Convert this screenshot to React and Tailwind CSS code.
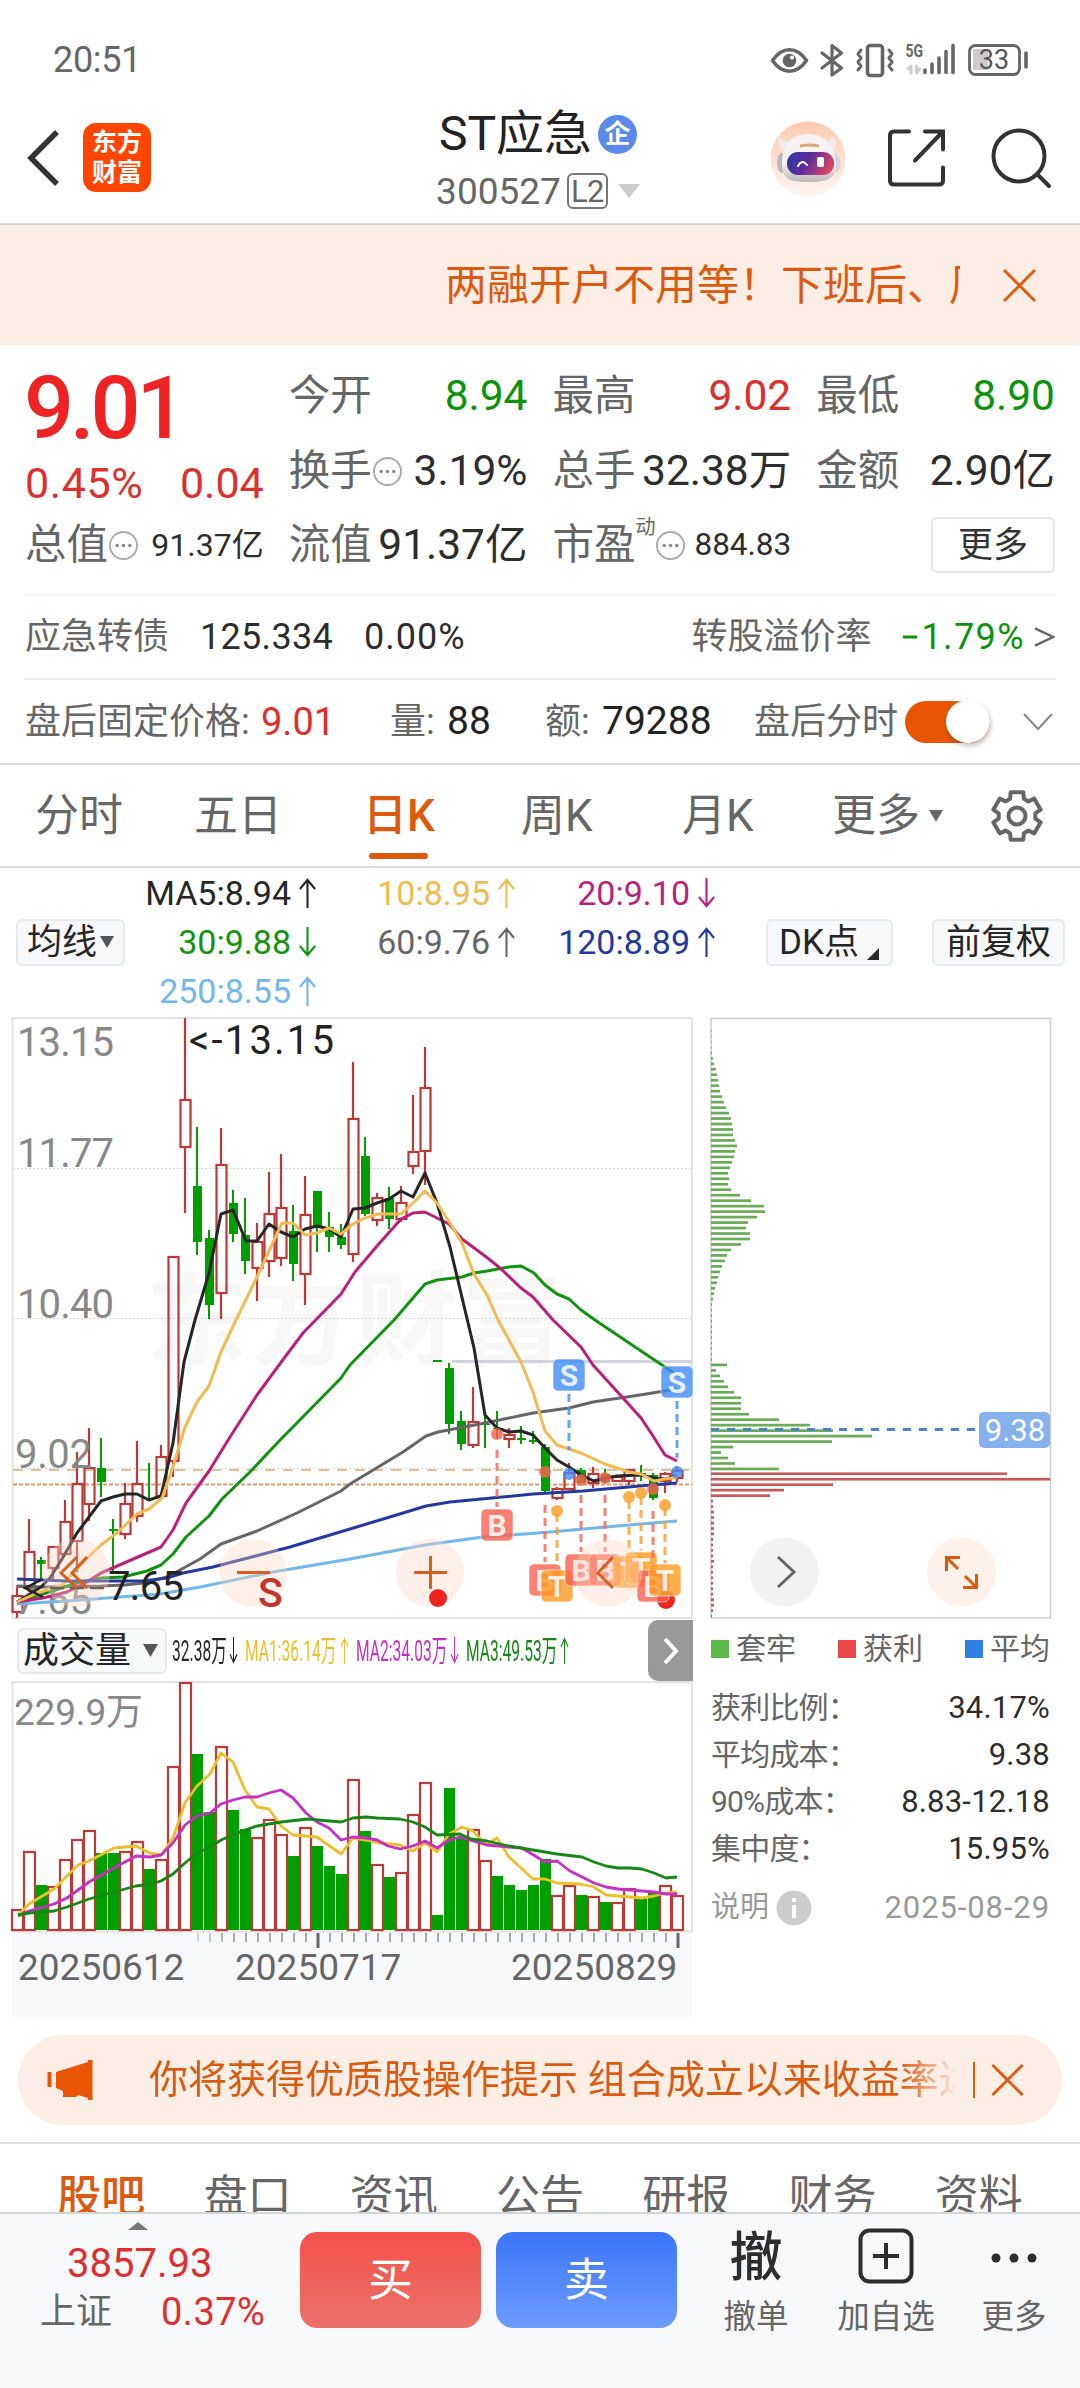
import clsx from 'clsx'

const RED = '#bb3a38'
const GREEN = '#009f00'

const quoteCols = [
  [
    { label: '今开', value: '8.94', tone: 'text-[#0b930b]' },
    { label: '换手', value: '3.19%', info: true },
    { label: '流值', value: '91.37亿' },
  ],
  [
    { label: '最高', value: '9.02', tone: 'text-[#dc2f2f]' },
    { label: '总手', value: '32.38万' },
    { label: '市盈', value: '884.83', info: true, sup: '动', small: true },
  ],
  [
    { label: '最低', value: '8.90', tone: 'text-[#0b930b]' },
    { label: '金额', value: '2.90亿' },
    { button: '更多' },
  ],
]

const maCols = [
  [
    { text: 'MA5:8.94', up: true, color: 'text-[#262626]' },
    { text: '30:9.88', up: false, color: 'text-[#119311]' },
    { text: '250:8.55', up: true, color: 'text-[#72b8ea]' },
  ],
  [
    { text: '10:8.95', up: true, color: 'text-[#f0bb50]' },
    { text: '60:9.76', up: true, color: 'text-[#666]' },
  ],
  [
    { text: '20:9.10', up: false, color: 'text-[#bb1f7c]' },
    { text: '120:8.89', up: true, color: 'text-[#23399f]' },
  ],
]

// [up, high, body top, body bottom, low]
const candles = [
  [1, 1585, 1596, 1612, 1618], [1, 1519, 1552, 1588, 1592], [0, 1557, 1560, 1564, 1580], [1, 1546, 1547, 1568, 1580],
  [1, 1500, 1522, 1554, 1556], [1, 1452, 1484, 1541, 1572], [1, 1428, 1468, 1504, 1521], [0, 1438, 1468, 1482, 1497],
  [0, 1519, 1529, 1531, 1572], [1, 1483, 1504, 1534, 1539], [1, 1441, 1484, 1516, 1522], [0, 1463, 1498, 1499, 1500],
  [1, 1445, 1457, 1496, 1497], [1, 1257, 1257, 1461, 1477], [1, 1018, 1100, 1147, 1213], [0, 1127, 1186, 1242, 1255],
  [0, 1230, 1238, 1305, 1319], [1, 1128, 1165, 1293, 1319], [0, 1190, 1203, 1234, 1242], [0, 1198, 1235, 1261, 1274],
  [1, 1223, 1242, 1268, 1301], [1, 1172, 1214, 1261, 1277], [1, 1154, 1208, 1258, 1266], [0, 1205, 1231, 1264, 1281],
  [1, 1176, 1215, 1274, 1305], [0, 1191, 1191, 1226, 1252], [0, 1212, 1227, 1237, 1252], [0, 1224, 1237, 1245, 1249],
  [1, 1062, 1119, 1254, 1262], [0, 1137, 1156, 1214, 1216], [1, 1193, 1198, 1220, 1226], [0, 1187, 1198, 1219, 1229],
  [1, 1186, 1203, 1219, 1222], [1, 1095, 1152, 1166, 1174], [1, 1047, 1088, 1151, 1185], [0, 1360, 1360, 1362, 1362],
  [0, 1363, 1368, 1424, 1434], [0, 1411, 1421, 1444, 1450], [1, 1387, 1422, 1445, 1448], [0, 1414, 1424, 1425, 1448],
  [0, 1411, 1428, 1429, 1438], [1, 1428, 1435, 1439, 1448], [0, 1426, 1438, 1440, 1444], [0, 1431, 1440, 1442, 1444],
  [0, 1444, 1447, 1491, 1492], [1, 1487, 1489, 1498, 1500], [1, 1463, 1473, 1489, 1490], [0, 1468, 1470, 1483, 1484],
  [1, 1467, 1474, 1483, 1488], [0, 1469, 1474, 1482, 1483], [1, 1476, 1477, 1481, 1482], [1, 1469, 1470, 1481, 1485],
  [0, 1465, 1473, 1474, 1481], [0, 1473, 1475, 1498, 1500], [1, 1472, 1474, 1481, 1493], [1, 1466, 1471, 1478, 1482],
]

const averages = [
  ['#72b8ea', '17,1604 67,1601 160,1594 200,1587 273,1572 350,1559 425,1545 483,1537 550,1532 617,1526 677,1521'],
  ['#666', '17,1586 43,1587 101,1586 125,1585 143,1583 167,1577 180,1570 200,1559 221,1544 257,1531 297,1513 341,1491 350,1484 403,1452 426,1436 438,1432 485,1423 533,1413 569,1408 593,1402 640,1395 677,1389'],
  ['#119311', '17,1602 40,1595 80,1582 101,1578 123,1577 147,1571 161,1565 173,1554 186,1537 209,1516 222,1499 250,1472 282,1438 293,1427 341,1378 350,1365 394,1320 401,1312 413,1298 425,1284 437,1280 462,1277 474,1273 487,1271 509,1267 521,1266 534,1273 545,1285 557,1294 569,1299 581,1310 595,1320 641,1351 677,1375'],
  ['#bb1f7c', '17,1602 43,1598 67,1592 87,1582 101,1573 161,1547 173,1530 186,1503 209,1471 230,1437 257,1395 282,1361 303,1333 341,1294 355,1272 377,1246 401,1219 413,1213 425,1212 449,1224 462,1239 485,1256 500,1268 521,1288 533,1297 553,1320 581,1347 593,1365 623,1398 641,1418 653,1436 665,1455 677,1461'],
  ['#262626', '17,1602 41,1587 50,1578 62,1559 77,1533 101,1501 113,1497 125,1494 137,1494 149,1500 161,1496 173,1443 184,1362 195,1320 209,1273 221,1214 233,1210 246,1241 257,1241 269,1224 281,1232 293,1237 305,1229 317,1226 329,1229 341,1237 353,1209 365,1208 377,1203 389,1199 401,1191 413,1197 425,1173 437,1203 450,1247 474,1348 485,1415 497,1428 509,1432 521,1431 533,1435 545,1448 557,1460 569,1467 581,1475 594,1481 605,1478 617,1476 641,1475 653,1478 665,1479 677,1476'],
  ['#f0bb50', '17,1602 37,1593 62,1585 83,1562 101,1545 118,1532 137,1514 149,1509 162,1498 173,1467 185,1427 197,1402 209,1386 221,1352 236,1320 257,1277 282,1223 293,1223 305,1235 317,1233 329,1228 341,1234 353,1224 365,1218 378,1214 401,1214 413,1203 425,1191 437,1203 450,1223 462,1243 474,1274 487,1295 498,1320 521,1362 533,1392 545,1431 557,1445 581,1453 605,1464 629,1472 641,1474 654,1481 665,1479 677,1477'],
  ['#23399f', '17,1579 67,1581 143,1581 167,1578 183,1573 213,1567 290,1547 350,1529 403,1513 426,1506 450,1502 533,1494 583,1491 640,1486 677,1483'],
]

const signals = [
  { t: 'S', x: 569, y: 1375, dot: 1474, from: 1394, to: 1450 },
  { t: 'S', x: 677, y: 1382, dot: 1472, from: 1401, to: 1458 },
  { t: 'B', x: 497, y: 1525, dot: 1434, from: 1450, to: 1507 },
  { t: 'B', x: 545, y: 1580, dot: 1472, from: 1505, to: 1562 },
  { t: 'T', x: 557, y: 1586, dot: 1511, from: 1514, to: 1567 },
  { t: 'B', x: 581, y: 1570, dot: 1480, from: 1495, to: 1552 },
  { t: 'B', x: 605, y: 1570, dot: 1478, from: 1495, to: 1552 },
  { t: 'T', x: 629, y: 1572, dot: 1497, from: 1501, to: 1553 },
  { t: 'T', x: 641, y: 1568, dot: 1493, from: 1497, to: 1550 },
  { t: 'B', x: 653, y: 1586, dot: 1489, from: 1511, to: 1567 },
  { t: 'T', x: 665, y: 1580, dot: 1505, from: 1508, to: 1563 },
]
const signalColors = { S: '#3f8cf8', B: '#f9604f', T: '#ff9a1f' }

// [up, top]
const volumes = [
  [1, 1910], [1, 1852], [0, 1885], [1, 1887], [1, 1860], [1, 1840], [1, 1831], [0, 1853], [0, 1853], [1, 1852],
  [1, 1842], [0, 1869], [1, 1860], [1, 1767], [1, 1683], [0, 1754], [0, 1812], [1, 1747], [0, 1810], [0, 1829],
  [1, 1838], [1, 1820], [1, 1835], [0, 1856], [1, 1828], [0, 1846], [0, 1866], [0, 1874], [1, 1780], [0, 1831],
  [1, 1865], [0, 1877], [1, 1873], [1, 1815], [1, 1783], [0, 1915], [0, 1788], [0, 1837], [1, 1830], [1, 1861],
  [0, 1876], [0, 1885], [0, 1890], [0, 1885], [0, 1859], [1, 1896], [1, 1886], [0, 1895], [1, 1897], [0, 1902],
  [1, 1903], [1, 1889], [0, 1898], [0, 1893], [1, 1886], [1, 1896],
]

const volumeAverages = [
  ['#eabf2b', '18,1915 29,1904 54,1889 78,1865 89,1861 114,1848 136,1846 150,1853 161,1855 173,1838 185,1803 197,1786 210,1774 221,1753 233,1762 245,1790 257,1807 269,1809 281,1826 293,1835 306,1836 317,1837 341,1854 353,1838 366,1840 379,1843 400,1845 413,1851 425,1843 437,1852 449,1834 462,1827 473,1831 486,1845 497,1838 509,1857 533,1879 545,1879 557,1883 580,1884 594,1887 606,1895 618,1896 642,1898 654,1896 666,1893 677,1892'],
  ['#c42fc4', '18,1916 29,1911 54,1904 67,1898 89,1882 114,1868 136,1856 150,1857 161,1855 173,1843 185,1825 197,1816 210,1813 221,1804 233,1800 245,1797 257,1797 269,1793 281,1790 293,1798 306,1813 317,1822 329,1828 341,1840 353,1837 366,1838 377,1840 388,1846 400,1849 413,1846 425,1841 437,1848 449,1840 460,1837 473,1841 487,1845 509,1847 522,1848 545,1862 557,1861 570,1871 594,1883 606,1887 618,1889 654,1892 666,1894 677,1894'],
  ['#168716', '18,1915 29,1913 54,1911 67,1907 89,1899 114,1892 136,1886 150,1884 161,1881 173,1874 185,1863 197,1853 210,1847 221,1840 245,1830 257,1826 281,1822 308,1819 329,1821 341,1822 353,1818 366,1817 377,1818 400,1819 413,1822 425,1827 437,1835 460,1834 471,1839 487,1841 509,1846 533,1850 557,1854 582,1857 594,1862 606,1866 618,1868 630,1868 642,1869 654,1873 666,1878 677,1877'],
]

const trapped = [
  0.5, 0.5, 0.5, 0.5, 1, 2, 3, 5, 6, 7, 8, 9, 11, 13, 15, 18, 20, 21, 22, 22, 24, 26, 24, 23, 21, 19, 17, 18, 17, 20, 29, 40, 53,
  54, 46, 37, 35, 39, 39, 30, 20, 16, 14, 11, 9, 7, 6, 4, 3, 2, 1, 1, 1, 1, 1, 1, 1, 1, 1, 1, 1, 16, 5, 9, 13, 17, 23,
  30, 30, 30, 38, 68, 99, 122, 161, 121, 22, 10, 17, 24, 68,
]
const profit = [
  296, 339, 122, 73, 59, 2, 2, 3, 3, 3, 3, 3, 2, 2, 2, 2, 3, 2, 2, 2, 2, 2, 2, 3, 3, 2, 1,
]

const chipStats = [
  ['获利比例：', '34.17%'],
  ['平均成本：', '9.38'],
  ['90%成本：', '8.83-12.18'],
  ['集中度：', '15.95%'],
]

const volumeStats = [
  { text: '32.38万', up: false, color: 'text-[#262626]', box: 'w-[54px]' },
  { text: 'MA1:36.14万', up: true, color: 'text-[#eabf2b]', box: 'w-[92px]' },
  { text: 'MA2:34.03万', up: false, color: 'text-[#c42fc4]', box: 'w-[91px]' },
  { text: 'MA3:49.53万', up: true, color: 'text-[#168716]', box: 'w-[91px]' },
]

const newsTabs = ['股吧', '盘口', '资讯', '公告', '研报', '财务', '资料']

const gearPoints = Array.from({ length: 6 }, (_, i) => i * 60 - 90)
  .flatMap((a) => [[a - 22, 18.5], [a - 15, 24.5], [a + 15, 24.5], [a + 22, 18.5]])
  .map(([a, r]) => {
    const rad = (a * Math.PI) / 180
    return `${27 + r * Math.cos(rad)},${27 + r * Math.sin(rad)}`
  })
  .join(' ')

function Arrow({ up, className }) {
  return (
    <svg viewBox="0 0 20 30" preserveAspectRatio="none" fill="none" stroke="currentColor" strokeWidth="2.2" className={className}>
      {up ? <path d="M10 30V2M2 11L10 2L18 11" /> : <path d="M10 0V28M2 19L10 28L18 19" />}
    </svg>
  )
}

function Caret({ className }) {
  return (
    <svg viewBox="0 0 14 12" preserveAspectRatio="none" fill="currentColor" className={className}>
      <path d="M0 0H14L7 12Z" />
    </svg>
  )
}

function Cross({ className }) {
  return (
    <svg viewBox="0 0 34 34" fill="none" stroke="#e05a0c" strokeWidth="3" className={className}>
      <path d="M1 1L33 33M33 1L1 33" />
    </svg>
  )
}

function InfoDots() {
  return (
    <svg viewBox="0 0 32 32" className="h-[31px] w-[31px] shrink-0">
      <circle cx="16" cy="16" r="14" fill="none" stroke="#aaa" strokeWidth="2" />
      <circle cx="9.5" cy="16" r="1.8" fill="#888" />
      <circle cx="16" cy="16" r="1.8" fill="#888" />
      <circle cx="22.5" cy="16" r="1.8" fill="#888" />
    </svg>
  )
}

function StatusBar() {
  return (
    <div className="flex h-[94px] shrink-0 items-center justify-between pt-[26px] pr-[52px] pl-[53px] text-[#666]">
      <span className="text-[36px] leading-none tracking-[-0.3px]">20:51</span>
      <svg viewBox="768 40 260 40" className="h-10 w-[260px]" fill="none" stroke="#666" strokeWidth="3.6" strokeLinejoin="round" strokeLinecap="round">
        <path d="M772.500 60.500C778 52.500 783 49.800 789.500 49.800S801 52.500 806.500 60.500C801 68.500 796 71.200 789.500 71.200S778 68.500 772.500 60.500Z" />
        <circle cx="789.500" cy="60.500" r="6.800" fill="#666" stroke="none" />
        <circle cx="792" cy="57.500" r="2" fill="#fff" stroke="none" />
        <path d="M822 53L841.500 68L832 75V45.500L841.500 53L822 68" strokeWidth="3.200" />
        <rect x="867.500" y="45.500" width="15" height="30" rx="3" />
        <path d="M861 50l-3 4l3 4l-3 4l3 4l-3 4M889 50l3 4l-3 4l3 4l-3 4l3 4" strokeWidth="3" />
        <text x="905.500" y="57" fontSize="18" fontWeight="700" textLength="17.500" lengthAdjust="spacingAndGlyphs" fill="#666" stroke="none">5G</text>
        <path d="M911 73V66L908 69M916.500 66V73L919.500 69" stroke="#ccc" strokeWidth="3" />
        <path d="M925 70V72.500M932 64V72.500M939 58V72.500M946 51.500V72.500M953 45.500V72.500" />
        <rect x="973" y="49" width="15" height="21" fill="#ccc" stroke="none" />
        <rect x="969.500" y="45.500" width="50" height="29" rx="6" strokeWidth="2.800" />
        <path d="M1026 53V67" />
        <text x="994" y="69" fontSize="27" textAnchor="middle" fill="#555" stroke="none">33</text>
      </svg>
    </div>
  )
}

function Robot() {
  return (
    <svg viewBox="0 0 76 76" className="h-[76px] w-[76px]">
      <defs>
        <linearGradient id="halo" x1="0" y1="0" x2="0" y2="1">
          <stop offset="0" stopColor="#fccab2" />
          <stop offset="1" stopColor="#fff6f1" />
        </linearGradient>
        <linearGradient id="shell" x1="0" y1="0" x2="0" y2="1">
          <stop offset="0.6" stopColor="#f6f2f1" />
          <stop offset="1" stopColor="#bcb6b9" />
        </linearGradient>
        <linearGradient id="visor" x1="0" y1="0" x2="1" y2="0.3">
          <stop offset="0" stopColor="#2b3aa6" />
          <stop offset="0.5" stopColor="#5a2b9c" />
          <stop offset="1" stopColor="#d04468" />
        </linearGradient>
      </defs>
      <circle cx="38" cy="38" r="37.500" fill="url(#halo)" />
      <path d="M9 15Q6 24 14 29L22 21Q12 21 9 15ZM62 15Q70 22 63 30L54 20Q62 20 62 15Z" fill="#f1ecec" />
      <ellipse cx="12" cy="42" rx="5" ry="10" fill="#bbb6bc" />
      <ellipse cx="66" cy="42" rx="4.500" ry="9" fill="#d8d2d5" />
      <path d="M12 42C12 23 22 13 38 13S64 23 66 42C67 56 60 61 39 61S12 58 12 42Z" fill="url(#shell)" />
      <path d="M30 23.500Q39 21.500 49 23.500V26.500Q39 24.500 30 26.500Z" fill="#dca873" />
      <rect x="17" y="31" width="47" height="23" rx="11" fill="url(#visor)" />
      <path d="M28 45Q32 37.500 37 44" fill="none" stroke="#fff" strokeWidth="2" strokeLinecap="round" />
      <rect x="47" y="36" width="7" height="10" rx="2" fill="#fff" />
    </svg>
  )
}

function NavBar() {
  return (
    <div className="flex h-[131px] shrink-0 items-center border-b-2 border-[#d9d9db]">
      <div className="flex w-[360px] items-center gap-[24px] pb-[2px] pl-[27px]">
        <svg viewBox="0 0 32 56" className="h-[56px] w-[32px]" fill="none" stroke="#333" strokeWidth="5.500">
          <path d="M30 2L4 28L30 54" />
        </svg>
        <div className="flex h-[69px] w-[68px] flex-col items-center justify-center gap-[3px] rounded-[13px] bg-[#ff4500] text-[25px] leading-[27px] font-bold text-white">
          <span>东方</span>
          <span>财富</span>
        </div>
      </div>
      <div className="flex w-[356px] flex-col items-center pt-[9px]">
        <div className="flex h-[56px] items-center gap-1.5">
          <span className="text-[48px] leading-none text-[#222]">ST应急</span>
          <span className="flex h-[39px] w-[39px] items-center justify-center rounded-full bg-[#5b8ae8] text-[26px] leading-none font-bold text-white">企</span>
        </div>
        <div className="flex h-[58px] items-center text-[#666]">
          <span className="text-[37px] leading-none">300527</span>
          <span className="ml-[6px] flex h-[36px] w-[41px] items-center justify-center rounded-[6px] border-2 border-[#777] text-[31px] leading-none tracking-tight">L2</span>
          <Caret className="ml-[10px] h-[14px] w-[22px] text-[#ccc]" />
        </div>
      </div>
      <div className="flex w-[364px] items-center justify-end pr-[29px]">
        <Robot />
        <svg viewBox="0 1.5 60 60" className="ml-[40px] h-[60px] w-[60px]" fill="none" stroke="#333" strokeWidth="4" strokeLinecap="round">
          <path d="M23 4H8Q4 4 4 8V53Q4 57 8 57H53Q57 57 57 53V40" />
          <path d="M39 4H57V22M56 5L29 33" />
        </svg>
        <svg viewBox="0 0 62 62" className="ml-[43px] h-[62px] w-[62px]" fill="none" stroke="#333" strokeWidth="4" strokeLinecap="round">
          <circle cx="30" cy="28" r="25.500" />
          <path d="M48 46L60 58" />
        </svg>
      </div>
    </div>
  )
}

function QuoteCell({ cell }) {
  if (cell.button) {
    return (
      <button className="ml-auto flex h-[56px] w-[124px] items-center justify-center rounded-[6px] border-2 border-[#e6e6e6] text-[35px] leading-none text-[#333]">
        {cell.button}
      </button>
    )
  }
  return (
    <>
      <span className="text-[41.5px] leading-none text-[#666]">{cell.label}</span>
      {cell.sup && <span className="-mr-px self-start pt-[8px] text-[20px] leading-none text-[#666]">{cell.sup}</span>}
      {cell.info && <InfoDots />}
      <span className={clsx('ml-auto leading-none', cell.small ? 'text-[31.5px]' : 'text-[42.5px]', cell.tone ?? 'text-[#2d2d2d]')}>
        {cell.value}
      </span>
    </>
  )
}

function Quote() {
  return (
    <section className="flex h-[249px] shrink-0 gap-[25px] px-[25px] pt-[14px] whitespace-nowrap">
      <div className="w-[239px]">
        <div className="-ml-px flex h-[94px] items-center pt-[3px] text-[88px] leading-none font-medium tracking-[-4px] text-[#ee2424]">9.01</div>
        <div className="flex h-[60px] items-center justify-between text-[43px] leading-none text-[#dc2f2f]">
          <span className="tracking-[0.6px]">0.45%</span>
          <span>0.04</span>
        </div>
        <div className="flex h-[64px] items-center">
          <span className="text-[41.5px] leading-none text-[#666]">总值</span>
          <InfoDots />
          <span className="ml-auto text-[32px] leading-none text-[#2d2d2d]">91.37亿</span>
        </div>
      </div>
      {quoteCols.map((col, i) => (
        <div key={i} className="w-[239px]">
          <div className="flex h-[74px] items-center"><QuoteCell cell={col[0]} /></div>
          <div className="flex h-[76px] items-center"><QuoteCell cell={col[1]} /></div>
          <div className="flex h-[72px] items-center"><QuoteCell cell={col[2]} /></div>
        </div>
      ))}
    </section>
  )
}

function BondRows() {
  return (
    <section className="shrink-0 border-b-2 border-[#dcdcdc] px-[25px] text-[36px] leading-none whitespace-nowrap text-[#666]">
      <div className="flex h-[84px] items-center border-t-2 border-[#f4f4f4]">
        <span>应急转债</span>
        <span className="ml-[31px] tracking-[0.3px] text-[#2d2d2d]">125.334</span>
        <span className="ml-[31px] tracking-[1px] text-[#2d2d2d]">0.00%</span>
        <span className="ml-auto">转股溢价率</span>
        <svg viewBox="0 0 14 4" className="ml-[32px] h-1 w-[14px]"><path d="M0 2H14" stroke="#0b930b" strokeWidth="3" /></svg>
        <span className="ml-[4px] tracking-[1.4px] text-[#0b930b]">1.79%</span>
        <svg viewBox="0 0 22 22" className="ml-[9px] h-[22px] w-[21px]" fill="none" stroke="#666" strokeWidth="2.500">
          <path d="M1 2L20 11L1 20" />
        </svg>
      </div>
      <div className="flex h-[85px] items-center border-t-2 border-[#f0f0f0] text-[#666]">
        <span className="w-[236px]">盘后固定价格:</span>
        <span className="w-[129px] text-[38px] text-[#dc2f2f]">9.01</span>
        <span className="w-[57px]">量:</span>
        <span className="w-[98px] text-[39px] text-[#222]">88</span>
        <span className="w-[57px]">额:</span>
        <span className="w-[152px] text-[39px] text-[#222]">79288</span>
        <span>盘后分时</span>
        <div className="ml-[7px] flex h-[42px] w-[85px] items-center justify-end rounded-full bg-[#ea5504]">
          <div className="h-[43px] w-[44px] rounded-full bg-white shadow-[1px_3px_5px_rgba(0,0,0,0.25)]" />
        </div>
        <svg viewBox="0 0 30 18" className="mr-[2px] ml-auto h-[18px] w-[30px]" fill="none" stroke="#888" strokeWidth="2">
          <path d="M1 1L15 16L29 1" />
        </svg>
      </div>
    </section>
  )
}

function PeriodTabs() {
  return (
    <nav className="flex h-[103px] shrink-0 items-center border-b-2 border-[#dcdcdc] pl-[35px] text-[44px] leading-none whitespace-nowrap text-[#666]">
      <span className="w-[159px]">分时</span>
      <span className="w-[169px]">五日</span>
      <span className="relative w-[158px] font-medium text-[#dc5a10]">
        日K
        <i className="absolute top-[59px] left-[6px] h-[6px] w-[59px] rounded-full bg-[#dc5a10]" />
      </span>
      <span className="w-[161px]">周K</span>
      <span className="w-[150px]">月K</span>
      <span>更多</span>
      <Caret className="ml-[9px] h-[12px] w-[14px]" />
      <svg viewBox="0 0 54 54" className="ml-[47px] h-[54px] w-[54px]" fill="none" stroke="#666" strokeWidth="4" strokeLinejoin="round">
        <polygon points={gearPoints} />
        <circle cx="27" cy="27" r="8.500" />
      </svg>
    </nav>
  )
}

function AverageBar() {
  return (
    <div className="flex h-[148px] shrink-0 items-center pl-4 text-[35px] leading-none whitespace-nowrap text-[#262626]">
      <button className="flex h-[47px] w-[109px] items-center justify-center gap-[3px] rounded-[6px] border-2 border-[#e7e9ec] bg-[#f7f8fa]">
        <span>均线</span>
        <Caret className="h-[12px] w-[14px] text-[#555]" />
      </button>
      {maCols.map((col, i) => (
        <div key={i} className={clsx('h-full text-[34px]', i === 0 ? 'w-[192px]' : i === 1 ? 'w-[199px]' : 'w-[200px]')}>
          {col.map((ma) => (
            <div key={ma.text} className={clsx('flex h-[49px] items-center justify-end gap-[7px]', ma.color)}>
              <span>{ma.text}</span>
              <Arrow up={ma.up} className="h-[30px] w-[19px]" />
            </div>
          ))}
        </div>
      ))}
      <button className="ml-[50px] flex h-[47px] w-[127px] items-center rounded-[6px] border-2 border-[#e7e9ec] bg-[#f7f8fa] pl-[11px]">
        <span>DK点</span>
        <svg viewBox="0 0 12 12" className="mt-6 ml-[8px] h-3 w-3"><path d="M12 0V12H0Z" fill="#262626" /></svg>
      </button>
      <button className="ml-[39px] flex h-[47px] w-[133px] items-center justify-center rounded-[6px] border-2 border-[#e7e9ec] bg-[#f7f8fa]">
        前复权
      </button>
    </div>
  )
}

function KChart() {
  return (
    <svg viewBox="0 1016 700 604" className="block h-[604px] w-[700px]" fill="none">
      <text x="146" y="1357" fontSize="101" fontWeight="700" letterSpacing="4" fill="#f7f7f7">东方财富</text>
      <g stroke="#d8d8d8" strokeDasharray="2 2">
        <path d="M13 1168.500H692M13 1318.500H692M13 1468.500H692" />
      </g>
      <rect x="12.500" y="1018" width="679.500" height="600" stroke="#e3e3e3" strokeWidth="2" />
      <path d="M13 1470H692" stroke="#dcc19c" strokeWidth="2" strokeDasharray="10 8" />
      <path d="M13 1484.500H692" stroke="#de9a6c" strokeWidth="2" strokeDasharray="4 2" />
      <path d="M452 1361.500H692" stroke="#d0d4da" strokeWidth="3" />

      {candles.map(([up, high, top, bottom, low], i) => {
        const x = 17 + i * 12
        return up ? (
          <g key={i} stroke={RED} strokeWidth="2.2">
            <path d={`M${x} ${high}V${top}M${x} ${bottom}V${low}`} />
            <rect x={x - 4.500} y={top} width="10" height={bottom - top} />
          </g>
        ) : (
          <g key={i} fill={GREEN}>
            <rect x={x - 1} y={high} width="2" height={low - high} />
            <rect x={x - 4} y={top} width="9" height={bottom - top} />
          </g>
        )
      })}

      <g fill="#888" fontSize="40">
        <text x="17" y="1056" textLength="97">13.15</text>
        <text x="17" y="1167" textLength="97">11.77</text>
        <text x="17" y="1318" textLength="97">10.40</text>
        <text x="15" y="1468" textLength="77">9.02</text>
        <text x="15" y="1614" textLength="77">7.65</text>
      </g>
      {averages.map(([color, points]) => (
        <polyline key={color} points={points} stroke={color} strokeWidth="3" strokeLinejoin="round" />
      ))}
      <g fill="#222" fontSize="40">
        <text x="189" y="1054" textLength="145">&lt;-13.15</text>
        <text x="108" y="1600" textLength="76">7.65</text>
      </g>
      <path d="M43 1579L25 1588L43 1597M50 1588H64M70 1588H84M90 1588H104" stroke="#222" strokeWidth="2.500" />

      <circle cx="666" cy="1600" r="9" fill="#f02520" />
      {signals.map((s, i) => (
        <g key={i}>
          <path d={`M${s.x} ${s.from}V${s.to}`} stroke={signalColors[s.t]} strokeOpacity="0.8" strokeWidth="3" strokeDasharray="8 5" />
          <circle cx={s.x} cy={s.dot} r="6" fill={signalColors[s.t]} fillOpacity="0.8" />
          <rect x={s.x - 16} y={s.y - 16} width="32" height="32" rx="5" fill={signalColors[s.t]} fillOpacity="0.8" stroke="#fff" strokeOpacity="0.6" />
          <text x={s.x} y={s.y + 10.500} fontSize="30" fontWeight="700" textAnchor="middle" fill="#fff" fillOpacity="0.85">{s.t}</text>
        </g>
      ))}

      <g fill="#fbd5c0" fillOpacity="0.36">
        <circle cx="76" cy="1573" r="34" />
        <circle cx="253" cy="1573" r="34" />
        <circle cx="430" cy="1573" r="34" />
        <circle cx="608" cy="1573" r="34" />
      </g>
      <g stroke="#d8601c" strokeWidth="3">
        <path d="M77 1557L61 1573L77 1588M87 1557L72 1573L87 1588" />
        <path d="M237 1572.500H270M414 1572.500H447M430.500 1556V1589" />
        <path d="M613 1557L598 1573L613 1588" />
      </g>
      <text x="258" y="1607" fontSize="41" fontWeight="500" fill="#c3352f">S</text>
      <circle cx="438" cy="1598" r="9" fill="#f02520" />
    </svg>
  )
}

function VolumeHeader() {
  return (
    <div className="flex h-[61px] w-[693px] items-center pl-[17px] text-[36px] leading-none whitespace-nowrap text-[#262626]">
      <button className="flex h-[46px] w-[150px] shrink-0 items-center rounded-[6px] border-2 border-[#e7e9ec] bg-[#f7f8fa] pl-[4px]">
        成交量
        <Caret className="ml-[12px] h-[13px] w-[15px] text-[#555]" />
      </button>
      <div className="flex gap-[7px] pl-[5px] text-[30px]">
        {volumeStats.map((s) => (
          <div key={s.text} className={clsx('flex items-center gap-[3px]', s.color)}>
            <span className={clsx('inline-block', s.box)}>
              <span className="inline-block origin-left scale-x-[0.52]">{s.text}</span>
            </span>
            <Arrow up={s.up} className="h-[27px] w-[9px] shrink-0" />
          </div>
        ))}
      </div>
      <button className="ml-auto flex h-[61px] w-[45px] items-center justify-center rounded-l-[10px] bg-[#999]">
        <svg viewBox="0 0 16 28" className="h-[28px] w-4" fill="none" stroke="#fff" strokeWidth="4"><path d="M2 2L13 14L2 26" /></svg>
      </button>
    </div>
  )
}

function VolumeChart() {
  return (
    <svg viewBox="0 1681 700 336" className="block h-[336px] w-[700px]" fill="none">
      <rect x="12" y="1932" width="680" height="85" fill="#f7f8fa" />
      <rect x="12.500" y="1682" width="679.500" height="249.500" stroke="#e3e3e3" strokeWidth="2" />
      <text x="14" y="1725" fontSize="37" textLength="129" fill="#888">229.9万</text>
      {volumes.map(([up, top], i) => {
        const x = 12 + i * 12
        return up ? (
          <rect key={i} x={x} y={top} width="11" height={1930 - top} stroke={RED} strokeWidth="2.2" />
        ) : (
          <rect key={i} x={x} y={top} width="11" height={1930 - top} fill={GREEN} />
        )
      })}
      {volumeAverages.map(([color, points]) => (
        <polyline key={color} points={points} stroke={color} strokeWidth="2.800" strokeLinejoin="round" />
      ))}
      {Array.from({ length: 41 }, (_, i) => {
        const major = i === 10 || i === 40
        return (
          <path
            key={i}
            d={`M${198 + i * 12} 1933V${major ? 1948 : 1942}`}
            stroke={major ? '#666' : '#888'}
            strokeOpacity={i < 3 ? 0.4 + i * 0.2 : 1}
            strokeWidth={major ? 3 : 1.500}
          />
        )
      })}
      <g fill="#666" fontSize="37">
        <text x="18" y="1980">20250612</text>
        <text x="235" y="1980">20250717</text>
        <text x="511" y="1980">20250829</text>
      </g>
    </svg>
  )
}

function ChipChart() {
  return (
    <svg viewBox="700 1016 380 604" className="block h-[604px] w-[380px]" fill="none">
      <rect x="711" y="1018.500" width="339.500" height="599.500" stroke="#ccc" strokeWidth="1.500" />
      {trapped.map((w, i) => (
        <rect key={i} x="711" y={1029.600 + i * 5.475} width={w} height="2.700" fill="#6aab57" />
      ))}
      {profit.map((w, i) => (
        <rect key={i} x="711" y={1472.400 + i * 5.475} width={w} height="2.700" fill="#c65a5a" />
      ))}
      <path d="M711 1429.500H975" stroke="#4a84c6" strokeWidth="3" strokeDasharray="8 8" />
      <rect x="979" y="1412" width="71" height="36" rx="5" fill="#85b1ec" />
      <text x="1015" y="1441" fontSize="31" textAnchor="middle" fill="#fff">9.38</text>
      <circle cx="784.500" cy="1572" r="34.500" fill="#f2f2f2" />
      <path d="M778 1557L794 1572L778 1587" stroke="#666" strokeWidth="3" />
      <circle cx="961.500" cy="1572" r="34.500" fill="#fef1ea" />
      <path d="M960 1557.500H946.500V1571M947 1558L958 1569M963 1587.500H976.500V1574M976 1587L965 1576" stroke="#dc5a10" strokeWidth="3" />
    </svg>
  )
}

function Legend({ swatch, children }) {
  return (
    <div className="flex items-center gap-[7px]">
      <i className={clsx('h-[18px] w-[18px]', swatch)} />
      {children}
    </div>
  )
}

function ChipPanel() {
  return (
    <div className="w-[380px] whitespace-nowrap text-[#666]">
      <ChipChart />
      <div className="pr-[30px] pl-[11px] text-[30px] leading-none">
        <div className="flex h-[58px] items-center justify-between">
          <Legend swatch="bg-[#5bb949]">套牢</Legend>
          <Legend swatch="bg-[#e94848]">获利</Legend>
          <Legend swatch="bg-[#2f80e4]">平均</Legend>
        </div>
        <div className="pt-[6px]">
          {chipStats.map(([label, value]) => (
            <div key={label} className="flex h-[47px] items-center justify-between">
              <span className="tracking-[-0.8px]">{label}</span>
              <span className="text-[31px] tracking-[0.2px] text-[#2d2d2d]">{value}</span>
            </div>
          ))}
        </div>
        <div className="mt-[11px] flex h-[49px] items-center text-[#999]">
          <span className="text-[29px]">说明</span>
          <svg viewBox="0 0 36 36" className="ml-[7px] h-[36px] w-[36px]">
            <circle cx="18" cy="18" r="17.500" fill="#ccc" />
            <path d="M18 15V28M18 8V12" stroke="#fff" strokeWidth="4" />
          </svg>
          <span className="ml-auto text-[31px] tracking-[0.9px]">2025-08-29</span>
        </div>
      </div>
    </div>
  )
}

function TipPill() {
  return (
    <div className="mx-[18px] mt-[18px] flex h-[90px] shrink-0 items-center rounded-full bg-[#fdeee5] pl-[29px] text-[39px] leading-none whitespace-nowrap text-[#dc5a10]">
      <svg viewBox="0 0 46 40" className="h-[40px] w-[46px]" fill="#ea5504">
        <rect x="0.500" y="12" width="4" height="15" />
        <path d="M9 12L41 2V38L31 35L29 37H16V31L9 28Z" />
        <rect x="41" y="0" width="4.500" height="40" />
      </svg>
      <div className="ml-[56px] w-[808px] overflow-hidden mask-r-from-93% mask-r-to-100% py-1">
        你将获得优质股操作提示&nbsp;组合成立以来收益率达到
      </div>
      <i className="ml-[16px] h-[36px] w-[2px] bg-[#dc5a10]" />
      <Cross className="ml-[16px] h-[32px] w-[33px]" />
    </div>
  )
}

function BottomBar() {
  return (
    <footer className="flex h-[176px] shrink-0 border-t-2 border-[#d4d5d7] bg-[#f7f8fa] leading-none whitespace-nowrap">
      <div className="w-[300px] pt-[8px] text-[#dc2f2f]">
        <svg viewBox="0 0 20 8" className="ml-[128px] h-[8px] w-[20px]"><path d="M0 8L10 0L20 8Z" fill="#777" /></svg>
        <div className="flex h-[62px] items-center pt-[5px] pl-[67px] text-[40px]">3857.93</div>
        <div className="flex h-[38px] items-center pt-[2px] pl-[40px] text-[38px]">
          <span className="w-[121px] text-[36px] text-[#666]">上证</span>
          <span className="tracking-[0.5px]">0.37%</span>
        </div>
      </div>
      <button className="mt-[18px] flex h-[96px] w-[181px] items-center justify-center rounded-[17px] bg-linear-to-b from-[#f3504a] to-[#ea7169] text-[45px] text-white">买</button>
      <button className="mt-[18px] ml-[15px] flex h-[96px] w-[181px] items-center justify-center rounded-[17px] bg-linear-to-b from-[#3a75f8] to-[#6e9bfe] text-[45px] text-white">卖</button>
      <div className="flex pl-[33px] text-[32.5px] text-[#666]">
        <div className="flex w-[92px] flex-col items-center">
          <span className="flex h-[84px] items-center pt-[4px] text-[53px] font-medium text-[#2d2d2d]">撤</span>
          <span className="flex h-[36px] items-center pt-[2px]">撤单</span>
        </div>
        <div className="flex w-[168px] flex-col items-center">
          <svg viewBox="0 0 56 56" className="mt-[14px] h-[56px] w-[56px]" fill="none" stroke="#2d2d2d" strokeWidth="4">
            <rect x="2.500" y="2.500" width="51" height="51" rx="9" />
            <path d="M28 15V41M15 28H41" />
          </svg>
          <span className="mt-[14px] flex h-[36px] items-center pt-[2px]">加自选</span>
        </div>
        <div className="flex w-[88px] flex-col items-center">
          <svg viewBox="0 0 46 10" className="mt-[39px] h-[10px] w-[46px]" fill="#2d2d2d">
            <circle cx="5" cy="5" r="4.500" />
            <circle cx="23" cy="5" r="4.500" />
            <circle cx="41" cy="5" r="4.500" />
          </svg>
          <span className="mt-[35px] flex h-[36px] items-center pt-[2px]">更多</span>
        </div>
      </div>
    </footer>
  )
}

export default function App() {
  return (
    <div className="flex h-[2388px] w-[1080px] flex-col overflow-hidden bg-white font-[Roboto,'Noto_Sans_CJK_SC',sans-serif]">
      <StatusBar />
      <NavBar />
      <div className="flex h-[120px] shrink-0 items-center bg-[#fdeee5] pl-[445px] text-[42px] leading-none whitespace-nowrap text-[#dc5a10]">
        <div className="w-[515px] overflow-hidden pt-[6px] pb-1">两融开户不用等！下班后、周末</div>
        <Cross className="ml-[43px] h-[33px] w-[33px]" />
      </div>
      <Quote />
      <BondRows />
      <PeriodTabs />
      <AverageBar />
      <div className="flex shrink-0">
        <div className="w-[700px]">
          <KChart />
          <VolumeHeader />
          <VolumeChart />
        </div>
        <ChipPanel />
      </div>
      <TipPill />
      <nav className="mt-[17px] flex h-[70px] shrink-0 overflow-hidden border-t-2 border-[#dcdcdc] px-[28px] pt-[31px] text-[44px] leading-none text-[#666]">
        {newsTabs.map((tab, i) => (
          <span key={tab} className={clsx('flex-1 text-center', i === 0 && 'font-medium text-[#dc5a10]')}>{tab}</span>
        ))}
      </nav>
      <BottomBar />
    </div>
  )
}
